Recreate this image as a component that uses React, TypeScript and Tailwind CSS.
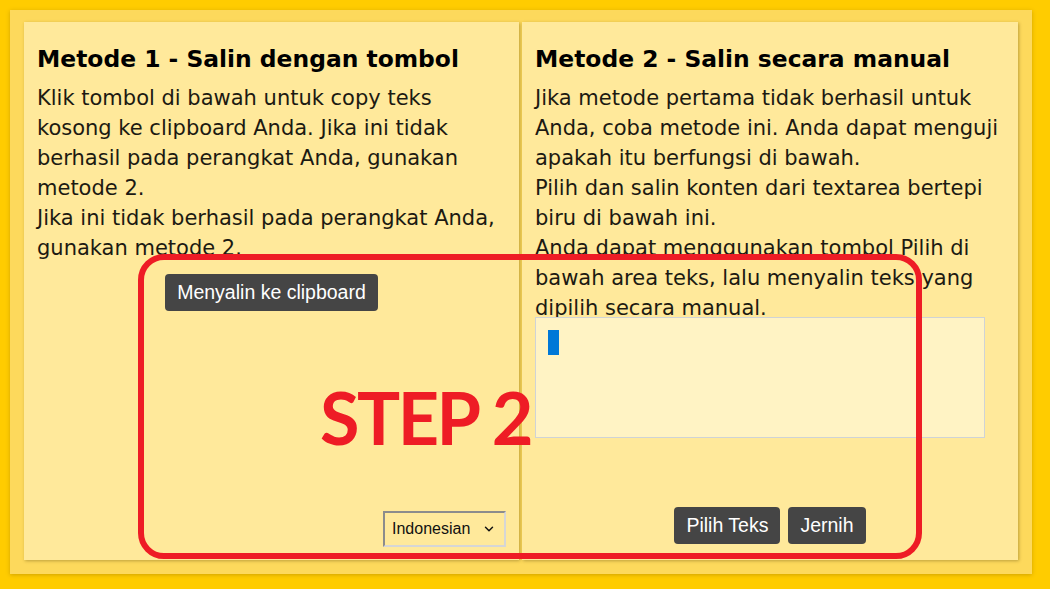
import { ChevronDown } from 'lucide-react';

const body = "text-[21px] leading-[30px] text-[#1c1a12]";

function DarkButton({ children }: { children: React.ReactNode }) {
  return (
    <button className="h-[37px] rounded-[4px] bg-[#454545] px-3 font-['Liberation_Sans',Arial,sans-serif] text-[19.5px] text-white">
      {children}
    </button>
  );
}

export default function App() {
  return (
    <div className="relative h-[589px] w-[1050px] overflow-hidden bg-[#ffcc00] pl-[10px] pt-[10px] font-['DejaVu_Sans',Verdana,sans-serif]">
      <div className="flex h-[564px] w-[1022px] gap-[3px] bg-[#fdd95c] pb-[14px] pl-[14px] pr-[14px] pt-[12px] shadow-[0_1px_4px_rgba(120,90,0,0.35)]">
        {/* method 1 */}
        <div className="flex w-[495px] flex-col bg-[#ffe99b] px-[13px] pb-[13px] pt-[23px] shadow-[1px_1px_3px_rgba(110,90,20,0.45)]">
          <h2 className="text-[23.4px] font-bold leading-[28px] text-black">Metode 1 - Salin dengan tombol</h2>
          <p className={`mt-[10px] ${body}`}>
            Klik tombol di bawah untuk copy teks kosong ke clipboard Anda. Jika ini tidak berhasil pada perangkat Anda, gunakan metode 2.
            <br />
            Jika ini tidak berhasil pada perangkat Anda, gunakan metode 2.
          </p>
          <div className="mt-[11px] flex justify-center">
            <DarkButton>Menyalin ke clipboard</DarkButton>
          </div>
          <div className="mt-auto flex justify-end">
            <div className="flex h-[36px] w-[123px] items-center justify-between border-2 border-b-[#d6d6d6] border-l-[#8c8c8c] border-r-[#d6d6d6] border-t-[#8c8c8c] pl-[7px] pr-[8px] font-['Liberation_Sans',Arial,sans-serif] text-[16px] text-[#111]">
              <span>Indonesian</span>
              <ChevronDown size={14} strokeWidth={2.5} />
            </div>
          </div>
        </div>

        {/* method 2 */}
        <div className="flex w-[496px] flex-col bg-[#ffe99b] px-[13px] pb-[16px] pt-[23px] shadow-[1px_1px_3px_rgba(110,90,20,0.45)]">
          <h2 className="text-[23.4px] font-bold leading-[28px] text-black">Metode 2 - Salin secara manual</h2>
          <p className={`mt-[10px] ${body}`}>
            Jika metode pertama tidak berhasil untuk Anda, coba metode ini. Anda dapat menguji apakah itu berfungsi di bawah.
            <br />
            Pilih dan salin konten dari textarea bertepi biru di bawah ini.
            <br />
            Anda dapat menggunakan tombol Pilih di bawah area teks, lalu menyalin teks yang dipilih secara manual.
          </p>
          <div className="-mt-[6px] h-[121px] w-[450px] border border-[#cfd3d6] bg-[#fff3c4] pl-[12px] pt-[12px]">
            <div className="h-[25px] w-[11px] bg-[#0078d7]" />
          </div>
          <div className="mt-auto flex justify-center gap-2">
            <DarkButton>Pilih Teks</DarkButton>
            <DarkButton>Jernih</DarkButton>
          </div>
        </div>
      </div>

      {/* annotation overlay */}
      <div className="pointer-events-none absolute left-[138px] top-[254px] h-[305px] w-[784px] rounded-[26px] border-[6px] border-[#ee1c25]" />
      <div className="pointer-events-none absolute left-[320px] top-[372px] font-['Lato',sans-serif] text-[72px] font-bold leading-[90px] tracking-[-2.5px] text-[#ee1c25]">
        STEP 2
      </div>
    </div>
  );
}
